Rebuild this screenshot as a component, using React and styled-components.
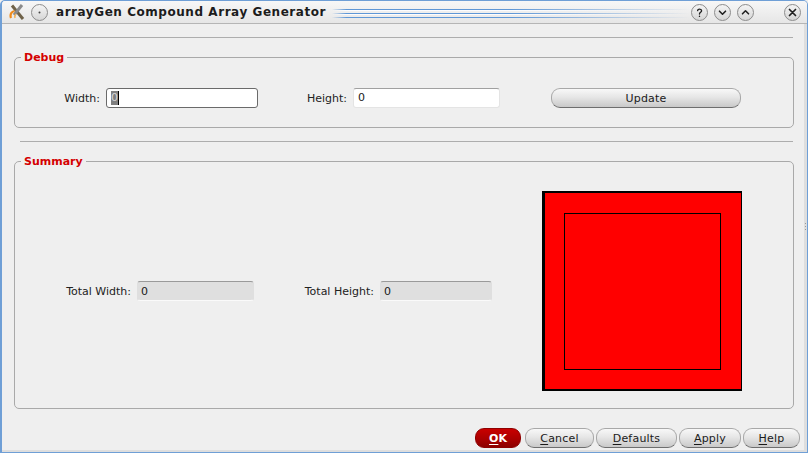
import React from "react";
import styled, { createGlobalStyle } from "styled-components";

const Global = createGlobalStyle`
  html, body { margin: 0; padding: 0; background: #efefef; }
  * { box-sizing: border-box; }
`;
const Win = styled.div`
  width: 808px; height: 453px; display: flex; flex-direction: column; position: relative;
  background: #efefef; color: #1a1a1a; overflow: hidden;
  font: 11px "DejaVu Sans", sans-serif;
  border: solid #6f9fd6; border-width: 1px 1px 1px 2px; border-radius: 5px 5px 0 0;
`;
const TitleBar = styled.div`
  height: 23px; flex: none; display: flex; align-items: center; padding: 0 6px 0 7px;
  background: linear-gradient(#f7f7f7, #e6e6e6); border-bottom: 1px solid #b5b5b5;
`;
const RoundBtn = styled.div`
  width: 17px; height: 17px; border-radius: 50%; flex: none; display: flex; align-items: center; justify-content: center;
  border: 1px solid #8c8c8c; background: linear-gradient(#f4f4f4, #d6d6d6); margin-left: ${p => p.$ml || 0}px;
`;
const Title = styled.div`
  font-size: 12px; font-weight: bold; letter-spacing: 0.55px; color: #1c1c1c; margin-left: 8px; white-space: nowrap;
`;
const Stripes = styled.div`
  flex: 1; height: 9px; align-self: flex-start; margin: 8px 2px 0 6px;
  background: repeating-linear-gradient(#5f97d6 0 1px, #fbfcfe 1px 2px, transparent 2px 4px);
  -webkit-mask-image: linear-gradient(90deg, transparent, #000 4%, #000 50%, transparent);
  mask-image: linear-gradient(90deg, transparent, #000 4%, #000 50%, transparent);
`;
const Body = styled.div`
  flex: 1; display: flex; flex-direction: column; padding: 13px 4px 0 12px; min-height: 0;
  box-shadow: inset -3px 0 0 #dedede, inset 0 -2px 0 #dedede;
`;
const Divider = styled.div`
  height: 1px; background: #adadad; margin: ${p => p.$mt || 0}px 10px 0 6px; flex: none;
`;
const Group = styled.fieldset`
  margin: ${p => p.$mt}px 9px 0 0; padding: 0; min-width: 0; border: 1px solid #a9a9a9; border-radius: 5px;
  height: ${p => p.$h}px; flex: none;
`;
const Legend = styled.legend`
  margin-left: 6px; padding: 0 3px; font-weight: bold; color: #d40000; font-size: 11px; line-height: 13px;
`;
const FormRow = styled.div`
  display: flex; align-items: center; height: 20px; margin-top: 24px;
`;
const Label = styled.label`
  text-align: right; flex: none; width: ${p => p.$w}px; margin-right: ${p => p.$mr || 6}px; color: #222;
`;
const Input = styled.div`
  height: 20px; width: ${p => p.$w}px; flex: none; background: #fff; border-radius: 3px; padding-left: 4px;
  display: flex; align-items: center; line-height: 14px;
  border: 1px solid ${p => p.$focus ? "#6a6a6a" : "#e4e4e4"};
  border-top-color: ${p => p.$focus ? "#6a6a6a" : "#a0a0a0"};
`;
const Selected = styled.span`
  background: #7f7f7f; color: #d8d8d8; border-right: 1px solid #000;
`;
const ReadOnly = styled.div`
  height: 20px; width: ${p => p.$w}px; flex: none; background: #dfdfdf; border-radius: 3px; padding-left: 3px;
  display: flex; align-items: center; border: 1px solid #dfdfdf; border-top-color: #9a9a9a; border-bottom-color: #fafafa;
`;
const Pill = styled.button`
  font: 11px "DejaVu Sans", sans-serif; color: #1a1a1a; height: 20px; width: ${p => p.$w}px; padding: 0; flex: none;
  border: 1px solid #a8a8a8; border-bottom-color: #6e6e6e; border-radius: 9px;
  background: linear-gradient(#f8f8f8, #e6e6e6 45%, #c9c9c9);
  letter-spacing: 0.2px; margin-left: ${p => p.$ml || 0}px;
  u { text-underline-offset: 2px; }
`;
const OkBtn = styled(Pill)`
  color: #fff; font-weight: bold; border-color: #8f0000; background: linear-gradient(#c90000, #a80000 60%, #8c0000); letter-spacing: 0;
`;
const SummaryRow = styled.div`
  display: flex; align-items: center; height: 200px; margin-top: 23px;
`;
const Fields = styled.div`
  display: flex; align-items: center; height: 20px;
`;
const Preview = styled.div`
  width: 200px; height: 200px; flex: none; background: #f00; margin-left: 50px; display: flex; align-items: center; justify-content: center;
  border: solid #000; border-width: 2px 1px 2px 3px; padding: 20px 20px 20px 19px;
`;
const PreviewInner = styled.div`
  width: 157px; height: 157px; border: 1px solid #000;
`;
const Footer = styled.div`
  display: flex; justify-content: flex-end; padding: 19px 3px 0 0;
`;
const Grip = styled.div`
  position: absolute; right: 1px; top: 222px; width: 1px; height: 7px;
  background: repeating-linear-gradient(#9a9a9a 0 1px, transparent 1px 3px);
`;
const Glyph = ({ d, w = 1.4 }) => (
  <svg width="11" height="11" viewBox="0 0 11 11" fill="none" stroke="#222" strokeWidth={w} strokeLinecap="round" strokeLinejoin="round"><path d={d} /></svg>
);
const Logo = () => (
  <svg width="16" height="16" viewBox="0 0 16 16" fill="none">
    <path d="M3 1.5 L14 15" stroke="#6f6249" strokeWidth="3" />
    <path d="M13 1 L5 11" stroke="#8a8a8a" strokeWidth="3" />
    <path d="M2 14 C0.5 10 3 7.5 5.5 7" stroke="#ef8a1a" strokeWidth="2.2" />
    <path d="M6 14 C5.5 12.5 6 11 7 10" stroke="#f2b35c" strokeWidth="1.6" />
  </svg>
);

export default function App() {
  return (
    <Win>
      <Global />
      <TitleBar>
        <Logo />
        <RoundBtn $ml={6}><svg width="3" height="3"><circle cx="1.5" cy="1.5" r="1" fill="#444" /></svg></RoundBtn>
        <Title>arrayGen Compound Array Generator</Title>
        <Stripes />
        <RoundBtn><Glyph d="M3.6 3.6 C3.8 1.6 7.6 1.6 7.6 3.8 C7.6 5.4 5.5 5.2 5.5 7 M5.5 9.2 V9.4" /></RoundBtn>
        <RoundBtn $ml={6}><Glyph d="M2.5 4.2 L5.5 7.2 L8.5 4.2" w={1.6} /></RoundBtn>
        <RoundBtn $ml={6}><Glyph d="M2.5 6.8 L5.5 3.8 L8.5 6.8" w={1.6} /></RoundBtn>
        <RoundBtn $ml={30}><Glyph d="M2.5 2.5 L8.5 8.5 M8.5 2.5 L2.5 8.5" w={1.7} /></RoundBtn>
      </TitleBar>
      <Body>
        <Divider />
        <Group $h={77} $mt={13}>
          <Legend>Debug</Legend>
          <FormRow>
            <Label $w={85}>Width:</Label>
            <Input $w={152} $focus><Selected>0</Selected></Input>
            <Label $w={89}>Height:</Label>
            <Input $w={147}>0</Input>
            <Pill $w={190} $ml={51}>Update</Pill>
          </FormRow>
        </Group>
        <Divider $mt={13} />
        <Group $h={254} $mt={13}>
          <Legend>Summary</Legend>
          <SummaryRow>
            <Fields>
              <Label $w={116}>Total Width:</Label>
              <ReadOnly $w={117}>0</ReadOnly>
              <Label $w={120}>Total Height:</Label>
              <ReadOnly $w={112}>0</ReadOnly>
            </Fields>
            <Preview><PreviewInner /></Preview>
          </SummaryRow>
        </Group>
        <Footer>
          <OkBtn $w={46}><u>O</u>K</OkBtn>
          <Pill $w={69} $ml={4}><u>C</u>ancel</Pill>
          <Pill $w={81} $ml={2}><u>D</u>efaults</Pill>
          <Pill $w={62} $ml={2}><u>A</u>pply</Pill>
          <Pill $w={57} $ml={2}><u>H</u>elp</Pill>
        </Footer>
      </Body>
      <Grip />
    </Win>
  );
}
